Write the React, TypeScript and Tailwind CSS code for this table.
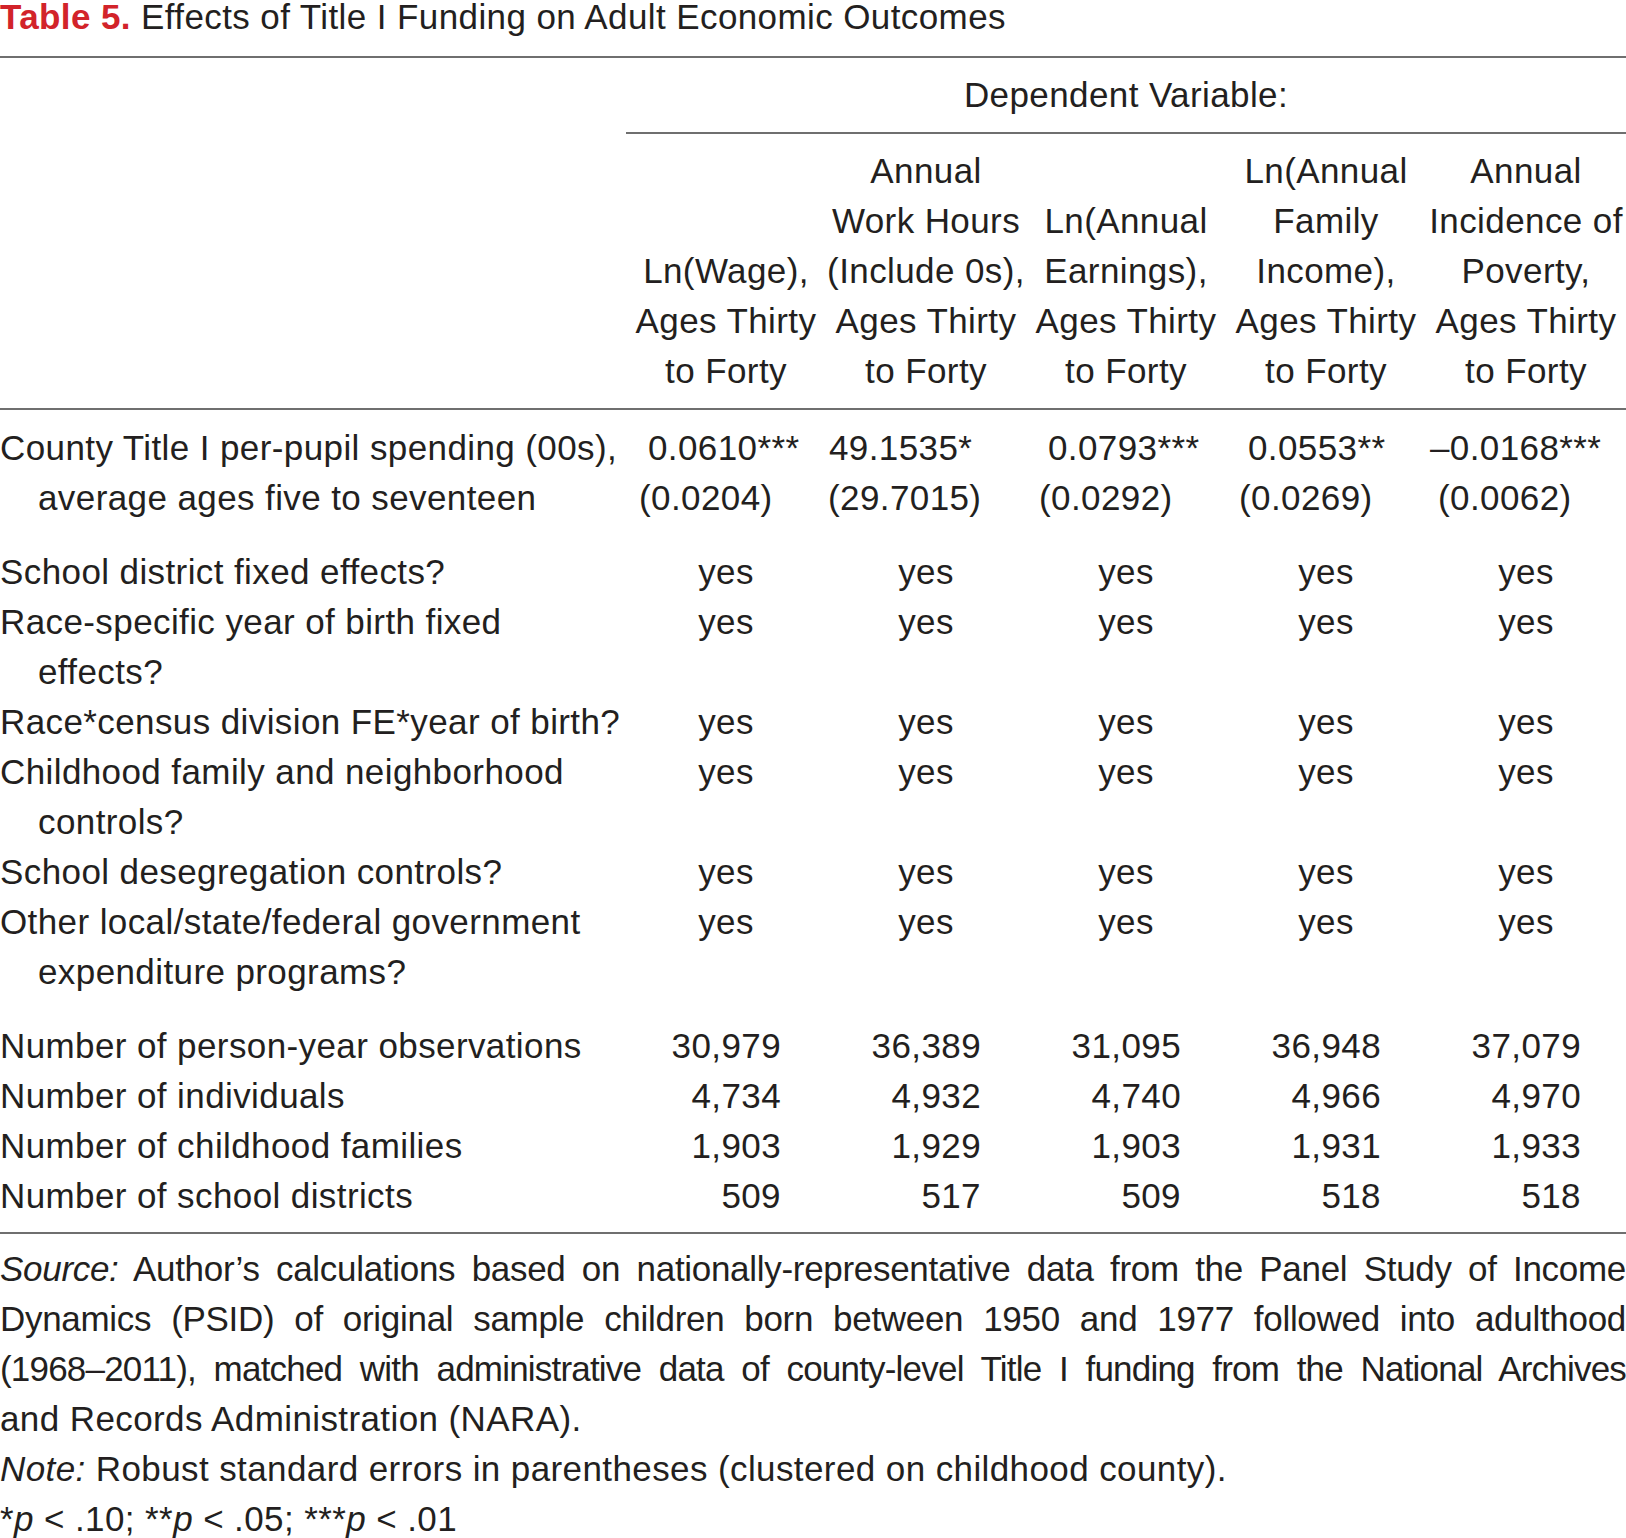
import React from 'react'

const headers = [
  ['Ln(Wage),', 'Ages Thirty', 'to Forty'],
  ['Annual', 'Work Hours', '(Include 0s),', 'Ages Thirty', 'to Forty'],
  ['Ln(Annual', 'Earnings),', 'Ages Thirty', 'to Forty'],
  ['Ln(Annual', 'Family', 'Income),', 'Ages Thirty', 'to Forty'],
  ['Annual', 'Incidence of', 'Poverty,', 'Ages Thirty', 'to Forty'],
]

// offsets are hand tuned per column, same as the printed table
const coefs = [
  { coef: '0.0610***', se: '(0.0204)', coefPad: 'pl-[22px]', sePad: 'pl-[13px]' },
  { coef: '49.1535*', se: '(29.7015)', coefPad: 'pl-[3px]', sePad: 'pl-[2px]' },
  { coef: '0.0793***', se: '(0.0292)', coefPad: 'pl-[22px]', sePad: 'pl-[13px]' },
  { coef: '0.0553**', se: '(0.0269)', coefPad: 'pl-[22px]', sePad: 'pl-[13px]' },
  { coef: '\u20130.0168***', se: '(0.0062)', coefPad: 'pl-[4px]', sePad: 'pl-[12px]' },
]

const controls = [
  ['School district fixed effects?'],
  ['Race-specific year of birth fixed', 'effects?'],
  ['Race*census division FE*year of birth?'],
  ['Childhood family and neighborhood', 'controls?'],
  ['School desegregation controls?'],
  ['Other local/state/federal government', 'expenditure programs?'],
]

const counts = [
  { label: 'Number of person-year observations', values: ['30,979', '36,389', '31,095', '36,948', '37,079'] },
  { label: 'Number of individuals', values: ['4,734', '4,932', '4,740', '4,966', '4,970'] },
  { label: 'Number of childhood families', values: ['1,903', '1,929', '1,903', '1,931', '1,933'] },
  { label: 'Number of school districts', values: ['509', '517', '509', '518', '518'] },
]

const Rule = ({ className = '' }: { className?: string }) => (
  <div className={`h-[2px] bg-[#6f6f6f] ${className}`} />
)

const Label = ({ lines }: { lines: string[] }) => (
  <div>
    {lines.map((l, i) => (
      <div key={i} className={`whitespace-nowrap ${i > 0 ? 'pl-[38px]' : ''}`}>
        {l}
      </div>
    ))}
  </div>
)

const grid = 'grid grid-cols-[626px_repeat(5,200px)]'

const App = () => {
  return (
    <div
      className="w-[1626px] h-[1538px] overflow-hidden bg-white text-[#231f20] text-[35px] leading-[50px] tracking-[0.4px]"
      style={{ fontFamily: '"Liberation Sans", Arial, sans-serif' }}
    >
      <div className="h-[56px] pt-[1px] text-[35px] leading-[32px] tracking-[0.4px] whitespace-nowrap">
        <span className="font-bold text-[#d2232a]">Table 5.</span> Effects of Title I Funding on Adult Economic
        Outcomes
      </div>
      <Rule />

      <div className={grid}>
        <div />
        <div className="col-span-5 h-[74px] flex items-center justify-center">Dependent Variable:</div>
      </div>
      <div className={grid}>
        <div />
        <Rule className="col-span-5" />
      </div>

      <div className={`${grid} pt-[12px] pb-[12px]`}>
        <div />
        {headers.map((h, i) => (
          <div key={i} className="flex flex-col justify-end text-center whitespace-nowrap">
            {h.map((l, j) => (
              <div key={j}>{l}</div>
            ))}
          </div>
        ))}
      </div>
      <Rule />

      <div className={`${grid} pt-[13px]`}>
        <Label lines={['County Title I per-pupil spending (00s),', 'average ages five to seventeen']} />
        {coefs.map((c, i) => (
          <div key={i} className="whitespace-nowrap">
            <div className={c.coefPad}>{c.coef}</div>
            <div className={c.sePad}>{c.se}</div>
          </div>
        ))}
      </div>

      <div className="pt-[24px]">
        {controls.map((lines, i) => (
          <div key={i} className={grid}>
            <Label lines={lines} />
            {[0, 1, 2, 3, 4].map((j) => (
              <div key={j} className="text-center">
                yes
              </div>
            ))}
          </div>
        ))}
      </div>

      <div className="pt-[24px] pb-[11px]">
        {counts.map((r) => (
          <div key={r.label} className={grid}>
            <Label lines={[r.label]} />
            {r.values.map((v, j) => (
              <div key={j} className="text-right pr-[45px]">
                {v}
              </div>
            ))}
          </div>
        ))}
      </div>
      <Rule />

      <div className="pt-[10px]">
        <div className="whitespace-nowrap text-justify [text-align-last:justify] tracking-[-0.3px]">
          <i>Source:</i> Author’s calculations based on nationally-representative data from the Panel Study of Income
        </div>
        <div className="whitespace-nowrap text-justify [text-align-last:justify] tracking-[-0.3px]">
          Dynamics (PSID) of original sample children born between 1950 and 1977 followed into adulthood
        </div>
        <div className="whitespace-nowrap text-justify [text-align-last:justify] tracking-[-0.8px]">
          (1968–2011), matched with administrative data of county-level Title I funding from the National Archives
        </div>
        <div className="whitespace-nowrap">and Records Administration (NARA).</div>
        <div className="whitespace-nowrap">
          <i>Note:</i> Robust standard errors in parentheses (clustered on childhood county).
        </div>
        <div className="whitespace-nowrap">
          *<i>p</i> &lt; .10; **<i>p</i> &lt; .05; ***<i>p</i> &lt; .01
        </div>
      </div>
    </div>
  )
}

export default App
